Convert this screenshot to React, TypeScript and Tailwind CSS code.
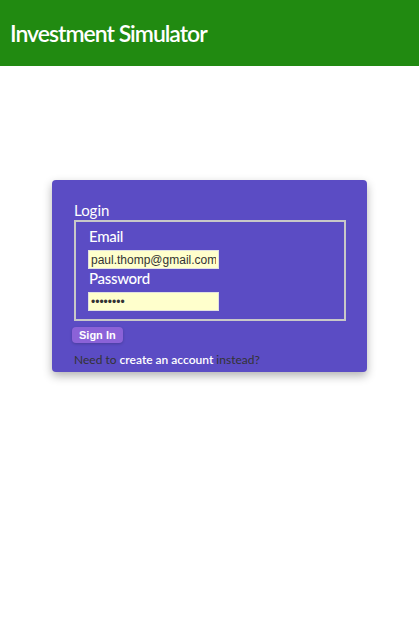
export default function App() {
  return (
    <div className="min-h-screen bg-white font-['Lato',sans-serif]">
      <header className="flex h-[66px] items-center bg-[#218a11] px-[10px]">
        <h1 className="text-[23px] font-semibold tracking-[-1px] text-white">
          Investment Simulator
        </h1>
      </header>

      <main className="flex justify-center pt-[114px]">
        <form className="w-[315px] rounded-[4px] bg-[#5b4cc4] pb-[4px] pl-[22px] pr-[21px] pt-[21px] shadow-[0_4px_10px_rgba(0,0,0,0.3)]">
          <fieldset className="border-0">
            <legend className="text-[15px] leading-[18px] text-white">Login</legend>
            <div className="mt-[1px] border-2 border-[#c8c8c8] px-[12px] pb-[8px] pt-[5px]">
              <label className="ml-[1px] block text-[15px] font-medium leading-[18px] tracking-[-0.3px] text-white">
                Email
              </label>
              <input
                type="email"
                defaultValue="paul.thomp@gmail.com"
                className="mt-[5px] block h-[19px] w-[131px] border border-[#e0e0e0] bg-[#ffffcc] px-[2px] font-['Liberation_Sans',sans-serif] text-[12px] text-[#333] outline-none"
              />
              <label className="ml-[1px] block text-[15px] font-medium leading-[18px] tracking-[-0.3px] text-white">
                Password
              </label>
              <input
                type="password"
                defaultValue="password"
                className="mt-[5px] block h-[19px] w-[131px] border border-[#e0e0e0] bg-[#ffffcc] px-[2px] font-['Liberation_Sans',sans-serif] text-[12px] text-[#333] outline-none"
              />
            </div>
          </fieldset>
          <button
            type="button"
            className="-ml-[2px] mt-[5px] h-[16px] rounded-[4px] bg-[#8b62d8] px-[7px] font-['Liberation_Sans',sans-serif] text-[11px] font-bold leading-[16px] text-white shadow-[0_1px_3px_rgba(0,0,0,0.2)]"
          >
            Sign In
          </button>
          <p className="mt-[7px] text-[12px] leading-[16px] text-[#333]">
            Need to <a className="font-semibold text-white">create an account</a> instead?
          </p>
        </form>
      </main>
    </div>
  );
}
